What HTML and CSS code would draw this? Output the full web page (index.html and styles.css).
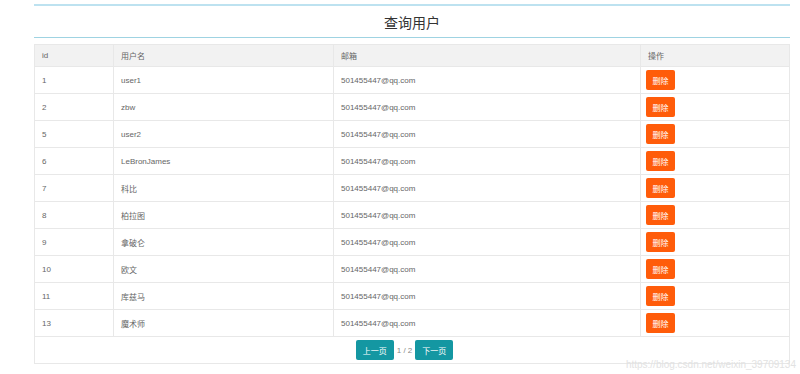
FILE: index.html
```html
<!DOCTYPE html>
<html lang="zh-CN">
<head>
    <meta charset="UTF-8">
    <title>查询用户</title>
    <link rel="stylesheet" href="styles.css">
</head>
<body>
    <div class="container">
        <div class="title-box">
            <h1>查询用户</h1>
        </div>

        <table class="user-table">
            <thead>
                <tr>
                    <th class="col-id">id</th>
                    <th class="col-name">用户名</th>
                    <th class="col-email">邮箱</th>
                    <th class="col-op">操作</th>
                </tr>
            </thead>
            <tbody>
                <tr><td>1</td><td>user1</td><td>501455447@qq.com</td><td><button class="btn-del">删除</button></td></tr>
                <tr><td>2</td><td>zbw</td><td>501455447@qq.com</td><td><button class="btn-del">删除</button></td></tr>
                <tr><td>5</td><td>user2</td><td>501455447@qq.com</td><td><button class="btn-del">删除</button></td></tr>
                <tr><td>6</td><td>LeBronJames</td><td>501455447@qq.com</td><td><button class="btn-del">删除</button></td></tr>
                <tr><td>7</td><td>科比</td><td>501455447@qq.com</td><td><button class="btn-del">删除</button></td></tr>
                <tr><td>8</td><td>柏拉图</td><td>501455447@qq.com</td><td><button class="btn-del">删除</button></td></tr>
                <tr><td>9</td><td>拿破仑</td><td>501455447@qq.com</td><td><button class="btn-del">删除</button></td></tr>
                <tr><td>10</td><td>欧文</td><td>501455447@qq.com</td><td><button class="btn-del">删除</button></td></tr>
                <tr><td>11</td><td>库兹马</td><td>501455447@qq.com</td><td><button class="btn-del">删除</button></td></tr>
                <tr><td>13</td><td>魔术师</td><td>501455447@qq.com</td><td><button class="btn-del">删除</button></td></tr>
            </tbody>
            <tfoot>
                <tr>
                    <td colspan="4" class="pager-cell">
                        <div class="pager">
                            <a href="#" class="btn-page">上一页</a>
                            <span class="page-num">1 / 2</span>
                            <a href="#" class="btn-page">下一页</a>
                        </div>
                    </td>
                </tr>
            </tfoot>
        </table>
    </div>

    <div class="watermark">https://blog.csdn.net/weixin_39709134</div>
</body>
</html>
```

FILE: styles.css
```css
* {
    box-sizing: border-box;
}

body {
    margin: 0;
    padding-top: 4px;
    font-family: "Liberation Sans", "Noto Sans CJK SC", sans-serif;
    color: #666;
    background: #fff;
}

.container {
    width: 756px;
    margin-left: 34px;
}

.title-box {
    border-top: 2px solid #bde2f0;
    border-bottom: 1px solid #9fd3e2;
    height: 34px;
    display: flex;
    align-items: center;
    justify-content: center;
    margin-bottom: 6px;
}

h1 {
    margin: 0;
    font-size: 14px;
    font-weight: normal;
    color: #333;
}

.user-table {
    width: 100%;
    border-collapse: collapse;
    table-layout: fixed;
    font-size: 8px;
}

.user-table th,
.user-table td {
    border: 1px solid #e8e8e8;
    padding: 0 7px;
    text-align: left;
    font-weight: normal;
}

.user-table th {
    background: #f2f2f2;
    height: 22px;
}

.user-table td {
    height: 27px;
}

.col-id { width: 79px; }
.col-name { width: 220px; }
.col-email { width: 307px; }

.user-table td:last-child {
    padding-left: 5px;
}

.btn-del {
    display: inline-block;
    width: 29px;
    height: 20px;
    padding: 0;
    border: none;
    border-radius: 2px;
    background: #ff5c0a;
    color: #fff;
    font-family: inherit;
    font-size: 8px;
    cursor: pointer;
}

.pager-cell {
    text-align: center;
}

.pager {
    display: flex;
    align-items: center;
    justify-content: center;
    gap: 2px;
    margin-left: -13px;
}

.btn-page {
    display: inline-flex;
    align-items: center;
    justify-content: center;
    height: 20px;
    width: 38px;
    border-radius: 2px;
    background: #1497a2;
    color: #fff;
    font-size: 8px;
    text-decoration: none;
}

.page-num {
    font-size: 8px;
    color: #888;
    padding: 0 1px;
}

.watermark {
    position: absolute;
    right: 4px;
    bottom: 4px;
    font-size: 10px;
    color: #e2e2e2;
}
```
